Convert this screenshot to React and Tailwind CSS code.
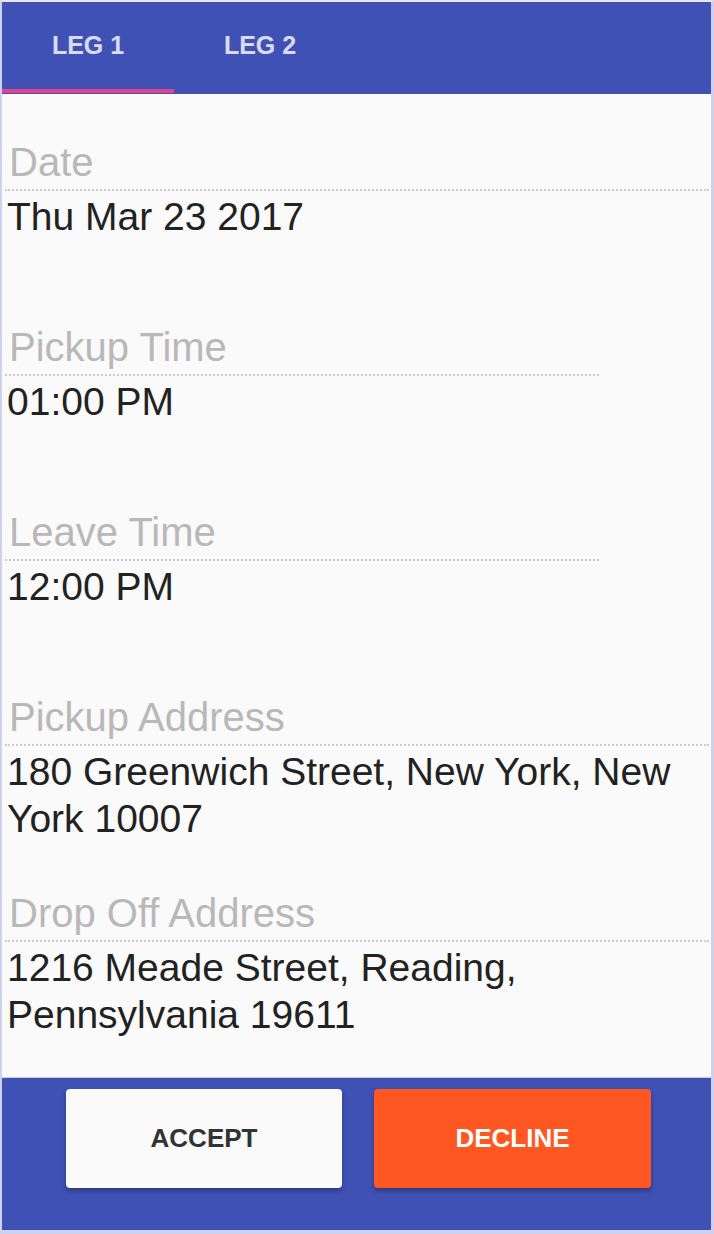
const fields = [
  { label: 'Date', value: 'Thu Mar 23 2017', line: 'w-full', gap: 'mb-[84px]' },
  { label: 'Pickup Time', value: '01:00 PM', line: 'w-[594px]', gap: 'mb-[84px]' },
  { label: 'Leave Time', value: '12:00 PM', line: 'w-[594px]', gap: 'mb-[84px]' },
  { label: 'Pickup Address', value: '180 Greenwich Street, New York, New York 10007', line: 'w-full', gap: 'mb-[48px]' },
  { label: 'Drop Off Address', value: '1216 Meade Street, Reading, Pennsylvania 19611', line: 'w-full', gap: '' },
];

function Field({ label, value, line, gap }) {
  return (
    <div className={gap}>
      <div className={`${line} border-b-2 border-dotted border-[#cccccc] pb-[4px]`}>
        <p className="pl-[4px] text-[40px] leading-[46px] text-[#b8b8b8]">{label}</p>
      </div>
      <p className="pt-[2px] pl-[2px] pr-4 text-[39px] leading-[47px] text-[#222]">{value}</p>
    </div>
  );
}

export default function App() {
  return (
    <div
      className="flex h-[1234px] w-[714px] flex-col border-t-2 border-r-[3px] border-b-4 border-l-2 border-[#cdd1ee] border-t-[#e6e6e6] bg-[#fafafa]"
      style={{ fontFamily: '"Liberation Sans", Arial, sans-serif' }}
    >
      {/* Tabs */}
      <div className="flex h-[92px] shrink-0 bg-[#3f51b5]">
        <div className="flex w-[172px] flex-col">
          <div className="flex flex-1 items-center justify-center pt-[1px] text-[25px] font-bold text-white/80">LEG 1</div>
          <div className="mb-[1px] h-[4px] bg-[#e4418c]" />
        </div>
        <div className="flex w-[172px] flex-col">
          <div className="flex flex-1 items-center justify-center pt-[1px] text-[25px] font-bold text-white/80">LEG 2</div>
          <div className="mb-[1px] h-[4px]" />
        </div>
      </div>

      {/* Details */}
      <div className="flex-1 overflow-hidden pt-[45px] pl-[3px] pr-[2px]">
        {fields.map((f) => (
          <Field key={f.label} {...f} />
        ))}
      </div>

      {/* Actions */}
      <div className="flex h-[153px] shrink-0 justify-center gap-8 border-t border-[#c7cbea] bg-[#3f51b5] pt-[11px] pl-[4px]">
        <button className="h-[99px] w-[276px] rounded-[4px] bg-[#fafafa] text-[26px] font-bold text-[#333] shadow-[0_3px_5px_rgba(0,0,0,0.3)]">
          ACCEPT
        </button>
        <button className="h-[99px] w-[277px] rounded-[4px] bg-[#ff5722] text-[26px] font-bold text-white shadow-[0_3px_5px_rgba(0,0,0,0.3)]">
          DECLINE
        </button>
      </div>
    </div>
  );
}
